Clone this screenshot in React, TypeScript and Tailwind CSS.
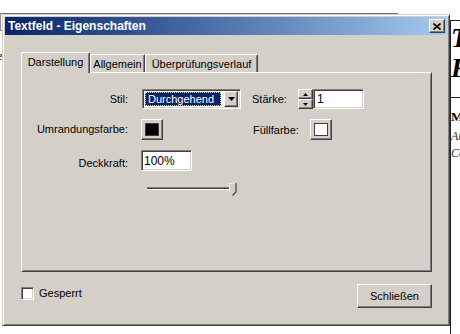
const ui = "font-['Liberation_Sans',Arial,sans-serif] text-[11px] leading-none text-black";

const raised =
  'border border-t-white border-l-white border-r-[#404040] border-b-[#404040] shadow-[inset_-1px_-1px_#808080]';
const sunken =
  'border border-t-[#808080] border-l-[#808080] border-r-white border-b-white shadow-[inset_1px_1px_#404040,inset_-1px_-1px_#d4d0c8]';

function Arrow({ up }: { up?: boolean }) {
  return (
    <svg width="7" height="4" viewBox="0 0 7 4">
      <polygon points={up ? '3.5,0 7,4 0,4' : '0,0 7,0 3.5,4'} fill="#000" />
    </svg>
  );
}

function SmallArrow({ up }: { up?: boolean }) {
  return (
    <svg width="5" height="3" viewBox="0 0 5 3">
      <polygon points={up ? '2.5,0 5,3 0,3' : '0,0 5,0 2.5,3'} fill="#000" />
    </svg>
  );
}

function Label({ children, w }: { children: string; w: string }) {
  return <span className={`${w} shrink-0 text-right`}>{children}</span>;
}

function ColorButton({ fill }: { fill: string }) {
  return (
    <div className={`${raised} flex h-[21px] w-[22px] items-center justify-center bg-[#d4d0c8]`}>
      <div className={`h-[13px] w-[14px] border border-[#404040] ${fill}`} />
    </div>
  );
}

function Tabs() {
  const tab = 'flex items-center justify-center border-t border-l border-t-white border-l-white border-r border-r-[#404040] shadow-[inset_-1px_0_#808080] rounded-t-[2px] bg-[#d4d0c8]';
  return (
    <div className="flex items-end">
      <div className={`${tab} relative z-10 -mb-px h-[21px] w-[69px] pb-[2px]`}>Darstellung</div>
      <div className={`${tab} h-[18px] w-[55px] pt-[1px]`}>Allgemein</div>
      <div className={`${tab} h-[18px] w-[113px] pt-[1px]`}>Überprüfungsverlauf</div>
    </div>
  );
}

function Panel() {
  return (
    <div className="h-[200px] border border-t-white border-l-white border-r-[#404040] border-b-[#404040] shadow-[inset_1px_1px_#d4d0c8,inset_-1px_-1px_#808080] pt-[16px] pl-[1px]">
      <div className="flex flex-col">
        {/* Stil / Stärke */}
        <div className="flex h-[20px] items-center">
          <Label w="w-[105px]">Stil:</Label>
          <div className={`${sunken} ml-[14px] flex h-[20px] w-[99px] items-center bg-white p-[2px]`}>
            <div className="flex h-full flex-1 items-center border border-dotted border-[#c8c8a0] bg-[#0a246a] pl-[2px] text-white">
              Durchgehend
            </div>
            <div className={`${raised} ml-[3px] flex h-[16px] w-[14px] items-center justify-center bg-[#d4d0c8]`}>
              <Arrow />
            </div>
          </div>
          <span className="ml-[11px] w-[46px]">Stärke:</span>
          <div className="flex h-[20px] w-[15px] flex-col">
            <div className={`${raised} flex h-[10px] items-center justify-center bg-[#d4d0c8]`}>
              <SmallArrow up />
            </div>
            <div className={`${raised} flex h-[10px] items-center justify-center bg-[#d4d0c8]`}>
              <SmallArrow />
            </div>
          </div>
          <div className={`${sunken} flex h-[20px] w-[51px] items-center bg-white pl-[3px] text-[12px]`}>1</div>
        </div>

        {/* Umrandungsfarbe / Füllfarbe */}
        <div className="mt-[10px] flex h-[21px] items-center">
          <Label w="w-[105px]">Umrandungsfarbe:</Label>
          <div className="ml-[13px]">
            <ColorButton fill="bg-black" />
          </div>
          <span className="ml-[90px] w-[57px] pt-[2px]">Füllfarbe:</span>
          <ColorButton fill="bg-white" />
        </div>

        {/* Deckkraft */}
        <div className="mt-[10px] flex h-[21px] items-center">
          <Label w="w-[105px] pt-[6px]">Deckkraft:</Label>
          <div className={`${sunken} ml-[13px] flex h-[21px] w-[51px] items-center bg-white pl-[2px] text-[12px]`}>100%</div>
        </div>

        {/* Slider */}
        <div className="mt-[12px] flex h-[13px] items-center pl-[124px]">
          <div className="relative h-[13px] w-[90px]">
            <div className="absolute left-0 top-[4px] h-[3px] w-[86px] border-t border-t-[#808080] border-b border-b-white bg-[#404040]" />
            <svg className="absolute left-[82px] top-0" width="8" height="13" viewBox="0 0 8 13">
              <polygon points="0,0 7,0 7,9 3.5,12.5 0,9" fill="#d4d0c8" />
              <polyline points="0,9 0,0 7,0" fill="none" stroke="#fff" strokeWidth="1" />
              <polyline points="7,0 7,9 3.5,12.5" fill="none" stroke="#404040" strokeWidth="1.2" />
            </svg>
          </div>
        </div>
      </div>
    </div>
  );
}

function Dialog() {
  return (
    <div className="absolute left-[2px] top-[14px] flex h-[312px] w-[448px] flex-col border border-t-[#d4d0c8] border-l-[#d4d0c8] border-r-[#404040] border-b-[#404040] bg-[#d4d0c8] p-[2px] shadow-[inset_1px_1px_#fff,inset_-1px_-1px_#808080]">
      <div className="flex h-[18px] shrink-0 items-center justify-between bg-gradient-to-r from-[#0a246a] to-[#a6caf0] pl-[3px] pr-[2px]">
        <span className="font-['Liberation_Sans',Arial,sans-serif] text-[12px] font-bold leading-none text-white">
          Textfeld - Eigenschaften
        </span>
        <div className={`${raised} flex h-[14px] w-[16px] items-center justify-center bg-[#d4d0c8]`}>
          <svg width="8" height="7" viewBox="0 0 8 7">
            <path d="M0.5 0.5 L7.5 6.5 M7.5 0.5 L0.5 6.5" stroke="#000" strokeWidth="1.6" />
          </svg>
        </div>
      </div>

      <div className={`${ui} mx-[15px] mt-[17px] ml-[16px]`}>
        <Tabs />
        <Panel />
      </div>

      <div className={`${ui} mx-[15px] ml-[16px] mt-[12px] flex h-[24px] items-start justify-between`}>
        <div className="mt-[3px] flex items-center">
          <div className={`${sunken} h-[13px] w-[13px] bg-white`} />
          <span className="ml-[5px]">Gesperrt</span>
        </div>
        <div className="flex h-[24px] w-[75px] items-center justify-center border border-t-white border-l-white border-r-[#404040] border-b-[#404040] shadow-[inset_-1px_-1px_#808080] bg-[#d4d0c8]">
          Schließen
        </div>
      </div>
    </div>
  );
}

export default function App() {
  return (
    <div className="relative h-[334px] w-[460px] overflow-hidden bg-white">
      {/* window behind */}
      <div className="absolute left-0 top-[13px] h-px w-[398px] bg-[#707070]" />
      <div className="absolute left-[397px] top-[13px] h-[3px] w-px bg-[#707070]" />
      <div className="absolute left-0 top-[13px] h-[18px] w-px bg-[#909090]" />
      <div className="absolute left-0 top-[30px] h-px w-[3px] bg-[#909090]" />
      <span className="absolute left-[-3px] top-[50px] font-['Liberation_Serif',serif] text-[12px] leading-none text-black">e</span>

      {/* document on the right */}
      <div className="absolute left-[450px] top-[20px] h-[314px] w-px bg-[#202020]" />
      <div className="absolute left-[450px] top-[20px] h-px w-[10px] bg-[#202020]" />
      <div className="absolute left-[450px] top-[97px] h-px w-[10px] bg-[#202020]" />
      <div className="absolute left-[451px] top-[24px] flex flex-col font-['Liberation_Serif',serif] text-black">
        <span className="h-[30px] text-[27px] font-bold italic leading-[28px]">T</span>
        <span className="h-[28px] text-[27px] font-bold italic leading-[28px]">F</span>
        <span className="mt-[27px] h-[16px] text-[13px] font-bold leading-[16px]">M</span>
        <span className="mt-[3px] h-[17px] text-[12px] italic leading-[17px] text-[#333]">Ar</span>
        <span className="h-[17px] text-[12px] italic leading-[17px] text-[#333]">Co</span>
      </div>

      <Dialog />
    </div>
  );
}
